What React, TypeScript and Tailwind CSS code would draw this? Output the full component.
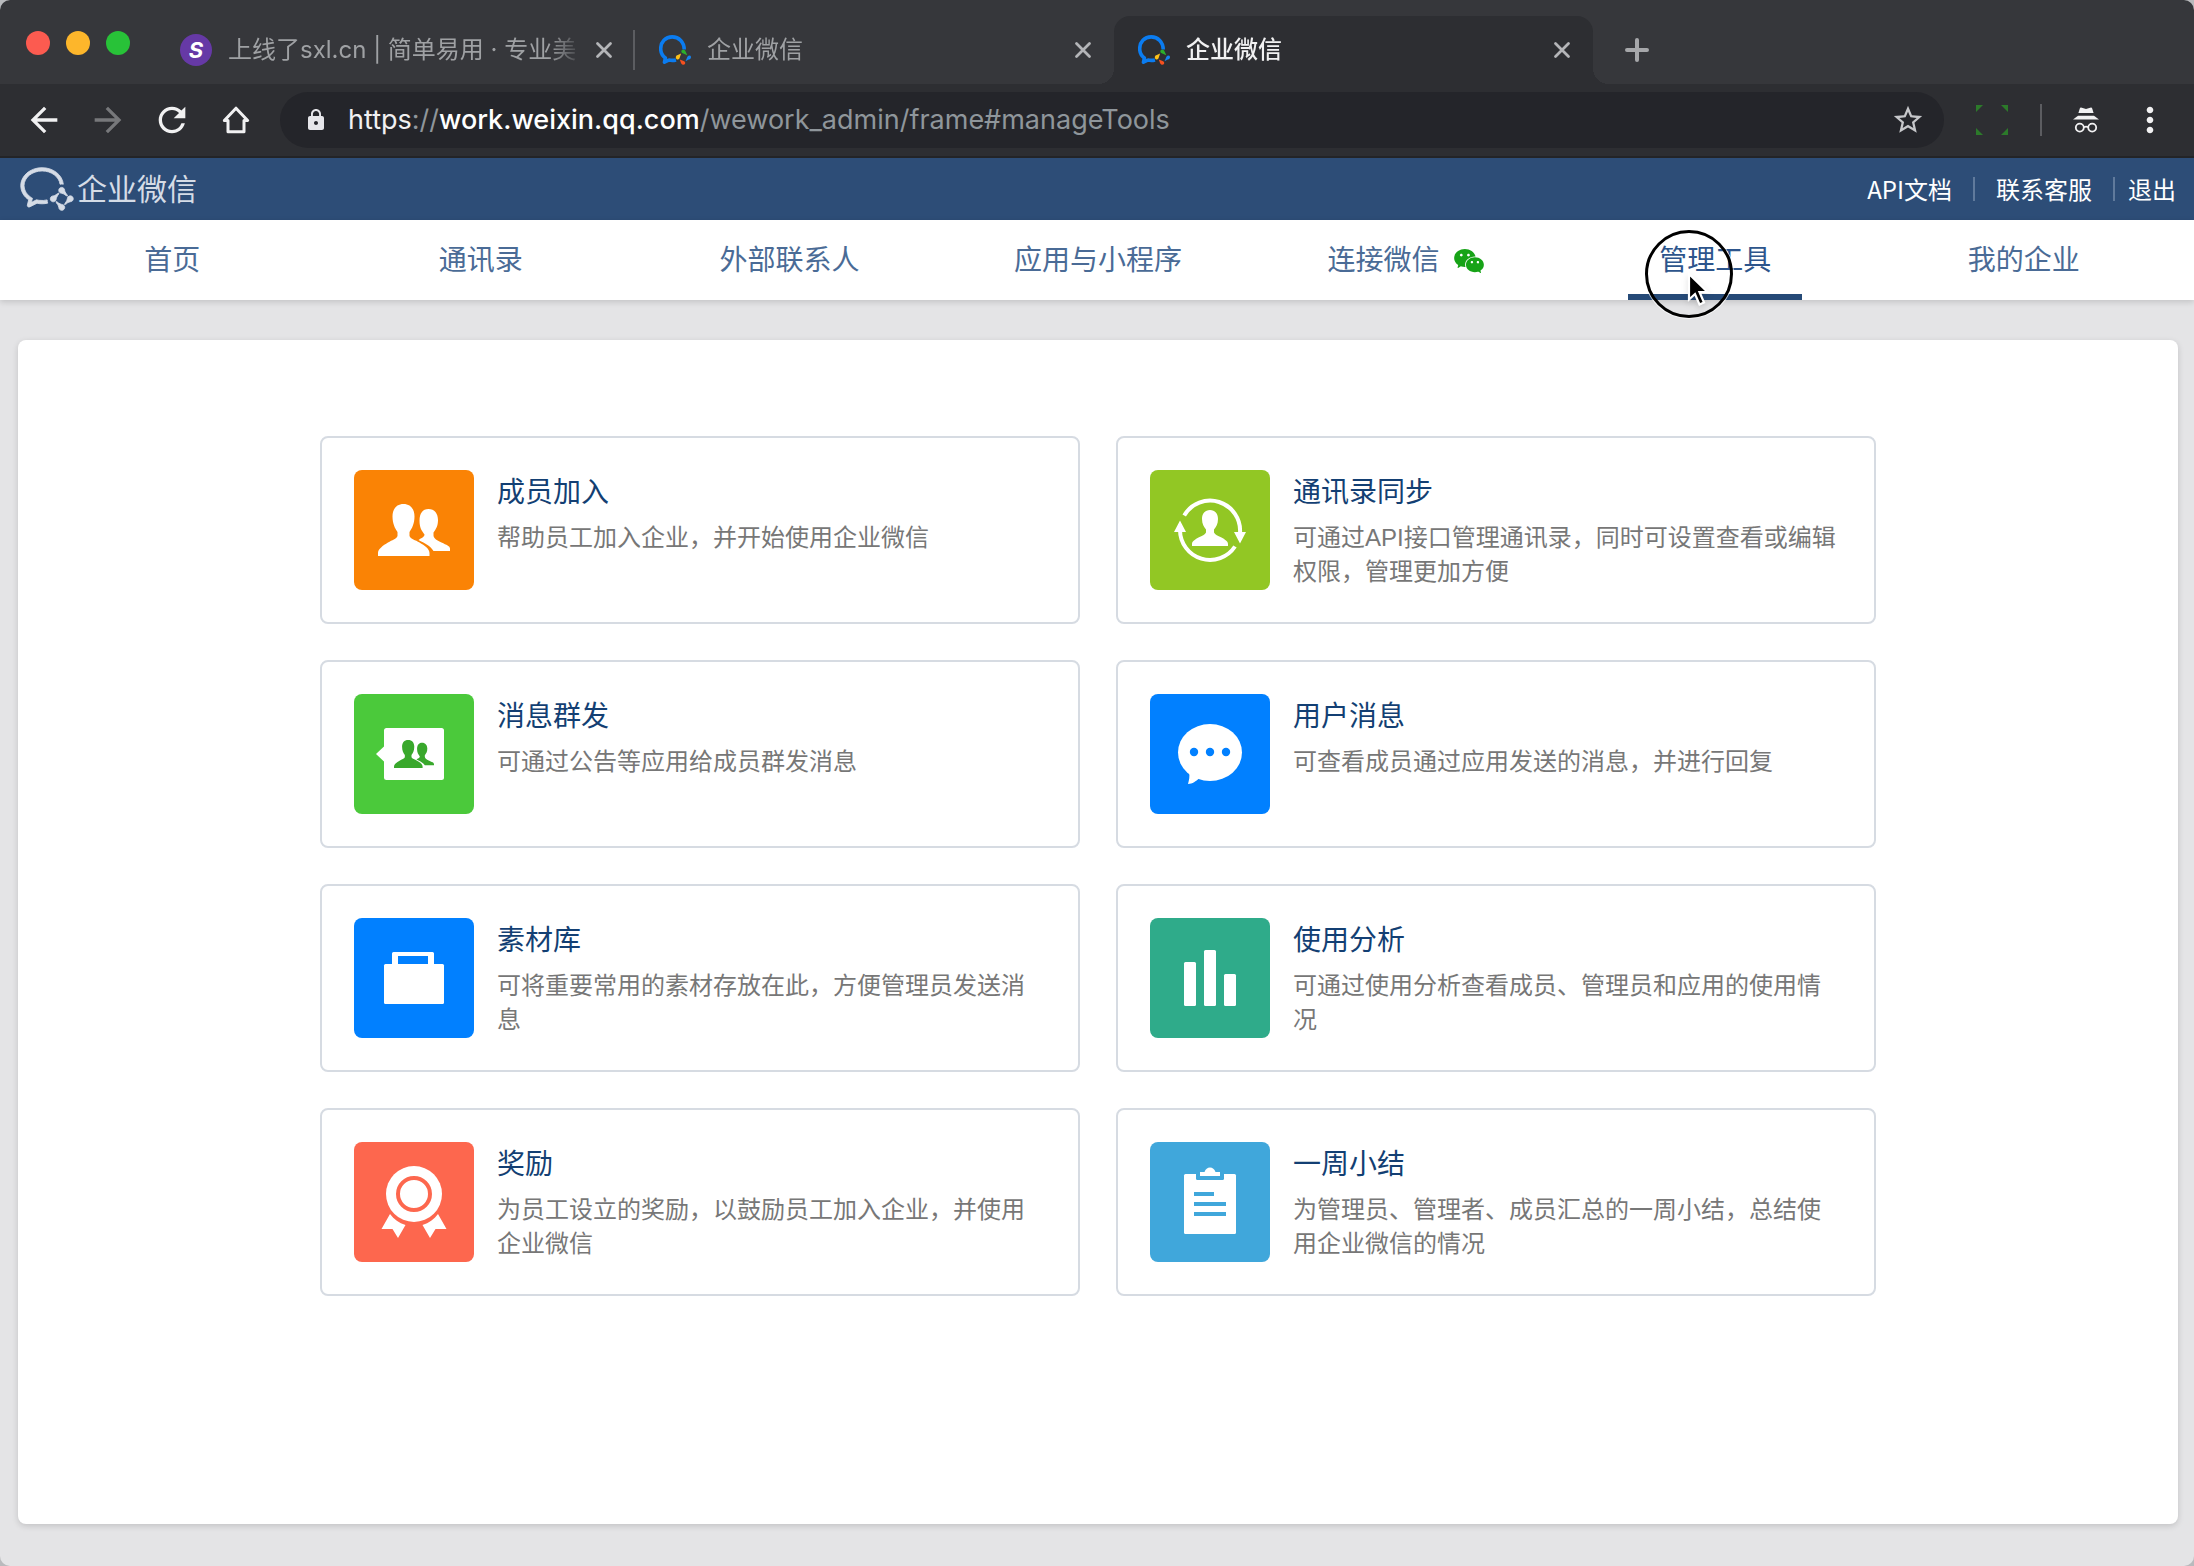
import React from 'react';
import { AiFillWechat, AiOutlineWechatWork } from 'react-icons/ai';
import {
  MdArrowBack,
  MdArrowForward,
  MdLock,
  MdMoreVert,
  MdRefresh,
  MdStarBorder,
} from 'react-icons/md';

const WorkFavicon = () => (
  <svg viewBox="0 0 32 30" className="h-[30px] w-8 shrink-0" fill="none">
    <path
      d="M25.200 14.500C25.200 7 20 1.900 13.200 1.900S1.700 7 1.700 13.800c0 4 1.800 7.200 4.700 9.200l-.9 4.200 4.600-2.200c1.500.4 4.300.6 6.900-.1"
      stroke="#0b7cf0"
      strokeWidth="3.600"
      strokeLinejoin="round"
    />
    <path d="M22.500 15.500a2.400 2.400 0 0 1 4.200 1.200l1.600 3.600-4-1.800a2.400 2.400 0 0 1-1.800-3z" fill="#2bb02b" />
    <path d="M31.500 20.800a2.400 2.400 0 0 1-1.800 3.800l-3.200 1.700 1.700-4a2.400 2.400 0 0 1 3.300-1.500z" fill="#1583ef" />
    <path d="M26 29a2.400 2.400 0 0 1-4-1l-1.200-3.400 3.800 1.300A2.400 2.400 0 0 1 26 29z" fill="#f5501f" />
    <path d="M17.600 24.300a2.400 2.400 0 0 1 1.200-4.200l3.300-1.600-1.300 4a2.400 2.400 0 0 1-3.200 1.800z" fill="#fcc019" />
  </svg>
);

const CloseIcon = () => (
  <svg viewBox="0 0 24 24" className="h-6 w-6" stroke="currentColor" strokeWidth="2.800" strokeLinecap="round">
    <path d="M5.500 5.500l13 13M18.500 5.500l-13 13" />
  </svg>
);

const HomeIcon = () => (
  <svg viewBox="0 0 24 24" className="h-10 w-10" fill="none" stroke="currentColor" strokeWidth="1.800">
    <path d="M5 12.300L12 4.900l7 7.400h-2.200v6.800H7.200v-6.800z" strokeLinejoin="round" />
  </svg>
);

const IncognitoIcon = () => (
  <svg viewBox="0 0 40 40" className="h-10 w-10" fill="currentColor">
    <path d="M15 7.500l5 1.400 5-1.400c.7 0 1 .3 1.200.9l1.400 4.600H12.400l1.400-4.600c.2-.6.5-.9 1.200-.9z" />
    <path d="M12 15.800h16l5 3.700H7z" />
    <g fill="none" stroke="currentColor" strokeWidth="1.800">
      <circle cx="13.800" cy="27.600" r="4" />
      <circle cx="26.200" cy="27.600" r="4" />
      <path d="M17.800 27.200c1.500-.8 3-.8 4.400 0" />
    </g>
  </svg>
);

const CaptureIcon = () => (
  <svg viewBox="0 0 32 32" className="h-8 w-8" fill="#2c7a2a">
    <path d="M0 1h7l-2 2-3 3-2 2zM32 1h-7l2 2 3 3 2 2zM0 31h7l-2-2-3-3-2-2zM32 31h-7l2-2 3-3 2-2z" />
  </svg>
);

const Tab = ({ icon, title, active, divided }) => (
  <div
    className={`relative flex w-[479px] items-center pl-6 pr-[19px] ${
      active ? 'rounded-t-2xl bg-[#2d2e32] text-[#f1f1f2]' : 'text-[#9fa1a4]'
    }`}
  >
    {active && (
      <>
        <span className="absolute bottom-0 -left-4 h-4 w-4 bg-[radial-gradient(circle_at_0_0,transparent_16px,#2d2e32_16px)]" />
        <span className="absolute bottom-0 -right-4 h-4 w-4 bg-[radial-gradient(circle_at_100%_0,transparent_16px,#2d2e32_16px)]" />
      </>
    )}
    {icon}
    <span
      className={`ml-4 mr-2 min-w-0 flex-1 overflow-hidden whitespace-nowrap text-[24px] leading-8 [mask-image:linear-gradient(to_right,black_90%,transparent)] ${
        active ? 'font-medium' : ''
      }`}
    >
      {title}
    </span>
    <button type="button" aria-label="关闭" className="text-[#b4b5b8]">
      <CloseIcon />
    </button>
    {divided && <span className="absolute right-0 h-10 w-[2px] bg-[#5c5d61]" />}
  </div>
);

const Browser = () => (
  <div className="font-[Inter,'Noto_Sans_CJK_SC',sans-serif]">
    <div className="flex h-[84px] bg-[#36373b] pl-[26px] pt-4">
      <div className="mr-[26px] mt-[15px] flex gap-4">
        <span className="h-6 w-6 rounded-full bg-[#fc5b50]" />
        <span className="h-6 w-6 rounded-full bg-[#fdb62b]" />
        <span className="h-6 w-6 rounded-full bg-[#28c238]" />
      </div>
      <Tab
        divided
        icon={
          <span className="flex h-8 w-8 shrink-0 items-center justify-center rounded-full bg-[#6639a6] text-[22px] font-bold italic text-white">
            S
          </span>
        }
        title="上线了sxl.cn | 简单易用 · 专业美"
      />
      <Tab icon={<WorkFavicon />} title="企业微信" />
      <Tab icon={<WorkFavicon />} title="企业微信" active />
      <button type="button" aria-label="新标签页" className="ml-6 flex items-center text-[#a6a7aa]">
        <svg viewBox="0 0 40 40" className="h-10 w-10" stroke="currentColor" strokeWidth="4" strokeLinecap="round">
          <path d="M20 10v20M10 20h20" />
        </svg>
      </button>
    </div>
    <div className="flex h-[74px] items-center border-b-2 border-[#232427] bg-[#2d2e32] px-6 text-[#f1f1f2]">
      <div className="flex gap-6">
        <button type="button" aria-label="后退">
          <MdArrowBack className="h-10 w-10" />
        </button>
        <button type="button" aria-label="前进" className="text-[#77787b]">
          <MdArrowForward className="h-10 w-10" />
        </button>
        <button type="button" aria-label="重新加载">
          <MdRefresh className="h-10 w-10" />
        </button>
        <button type="button" aria-label="主页">
          <HomeIcon />
        </button>
      </div>
      <div className="ml-6 mr-8 flex h-14 flex-1 items-center rounded-full bg-[#24252a] pl-6 pr-[19px]">
        <MdLock className="h-6 w-6 text-[#e6e6ea]" />
        <div role="textbox" aria-label="地址" className="ml-5 flex-1 text-[27px] leading-9 text-[#8f969b]">
          <span className="text-[#f1f1f2]">https</span>://
          <span className="font-medium text-white">work.weixin.qq.com</span>
          /wework_admin/frame#manageTools
        </div>
        <button type="button" aria-label="收藏" className="text-[#c6c7ca]">
          <MdStarBorder className="h-[34px] w-[34px]" />
        </button>
      </div>
      <button type="button" aria-label="截图">
        <CaptureIcon />
      </button>
      <span className="ml-8 mr-6 h-8 w-[2px] bg-[#5c5d61]" />
      <IncognitoIcon />
      <button type="button" aria-label="更多" className="ml-6">
        <MdMoreVert className="h-10 w-10" />
      </button>
    </div>
  </div>
);

const Pointer = () => (
  <span className="pointer-events-none absolute left-1/2 top-[10px] z-10 -ml-[70px] h-[88px] w-[88px] rounded-full border-[3px] border-black shadow-[0_0_0_1px_rgba(255,255,255,0.7)]">
    <svg viewBox="-3 -3 24 38" className="absolute left-[38px] top-[38px] h-[38px] w-6 drop-shadow-md">
      <path
        d="M0 0v25.500l6-5.500 4.500 10.500 4.500-2-4.500-10.500h8z"
        fill="black"
        stroke="white"
        strokeWidth="2.200"
      />
    </svg>
  </span>
);

const navItems = ['首页', '通讯录', '外部联系人', '应用与小程序', '连接微信', '管理工具', '我的企业'];

const Header = () => (
  <>
    <header className="flex h-[62px] items-center justify-between bg-[#2d4d77] pl-[17px] pr-[18px]">
      <a href="#home" className="flex items-center text-[30px] text-[#d5dce6]">
        <AiOutlineWechatWork className="h-[60px] w-[60px]" stroke="currentColor" strokeWidth="14" />
        企业微信
      </a>
      <div className="flex items-center font-['Noto_Sans_CJK_SC',sans-serif] text-[24px] leading-8 text-white">
        <a href="#api">API文档</a>
        <span className="mx-[21px] h-6 w-[2px] bg-[#607a9c]" />
        <a href="#service">联系客服</a>
        <span className="ml-[21px] mr-[13px] h-6 w-[2px] bg-[#607a9c]" />
        <a href="#logout">退出</a>
      </div>
    </header>
    <nav className="relative flex h-20 bg-white pl-[18px] pr-4 text-[28px] text-[#4a6b96] shadow-[0_2px_6px_rgba(0,0,0,0.15)]">
      {navItems.map((item) => {
        const active = item === '管理工具';
        return (
          <div key={item} className="relative flex flex-1 justify-center">
            <a
              href={`#${item}`}
              className={`flex items-center gap-3 border-b-[6px] px-[31px] pt-2 ${
                active ? 'border-[#264a77] text-[#2d558c]' : 'border-transparent'
              }`}
            >
              {item}
              {item === '连接微信' && <AiFillWechat className="h-[34px] w-[34px] text-[#17a317]" />}
            </a>
            {active && <Pointer />}
          </div>
        );
      })}
    </nav>
  </>
);

const People = () => (
  <>
    <path d="M49.500 34c7 0 11 5 11 12.500 0 7-2.500 12-5 15.500v4c1 3 6 4 10 6.500 5 3 10 6 10 10.500v3H24v-3c0-4 5-7.500 10-10.500 4-2.500 8.500-3.500 9.500-6.500v-4c-2.500-3.500-5-8.500-5-15.500 0-7.500 4-12.500 11-12.500z" />
    <path d="M74.500 39c6 0 9.500 4.500 9.500 11 0 6-2 9-4.500 12.500v3c0 3 4 5 8 7 5 2.500 8.500 3.500 8.500 6V81H79.500c-3-5-9-8-15-11 2-1.500 6-3 6-5.500-3-4-5-7-5-14 0-7 3-11.500 9-11.500z" />
  </>
);

const tools = [
  {
    title: '成员加入',
    text: '帮助员工加入企业，并开始使用企业微信',
    color: 'bg-[#fa8305] text-[#fa8305]',
    icon: <People />,
  },
  {
    title: '通讯录同步',
    text: '可通过API接口管理通讯录，同时可设置查看或编辑权限，管理更加方便',
    color: 'bg-[#92c724] text-[#92c724]',
    icon: (
      <>
        <path d="M60 40c5 0 8 3.500 8 9 0 5-2 8-4 10.500v3c1 2.500 4 3 7 4.800 4 2.200 7 4 7 6.700v2H42v-2c0-2.700 3-4.500 7-6.700 3-1.800 6-2.300 7-4.800v-3c-2-2.500-4-5.500-4-10.500 0-5.500 3-9 8-9z" />
        <g fill="none" stroke="white" strokeWidth="4">
          <path d="M34.200 45.500A30 30 0 0 1 90 63" />
          <path d="M30 60a30 30 0 0 0 55 16.500" />
        </g>
        <path d="M84 62h12l-6 11.500zM24 62h12l-6-11.500z" />
      </>
    ),
  },
  {
    title: '消息群发',
    text: '可通过公告等应用给成员群发消息',
    color: 'bg-[#4bc93b] text-[#39a82c]',
    icon: (
      <>
        <rect x="30" y="34" width="60" height="52" rx="2.500" />
        <path d="M30.500 52l-8.500 8 8.500 8z" />
        <g fill="currentColor" transform="translate(26.700 27.600) scale(.555 .54)">
          <People />
        </g>
      </>
    ),
  },
  {
    title: '用户消息',
    text: '可查看成员通过应用发送的消息，并进行回复',
    color: 'bg-[#0180ff] text-[#0180ff]',
    icon: (
      <>
        <ellipse cx="60" cy="58.500" rx="32" ry="28.500" />
        <path d="M39 78c1 4.500 0 8-1 12 4.500 0 8-3 11-5.500z" />
        <g fill="currentColor">
          <circle cx="44" cy="58" r="4.200" />
          <circle cx="60" cy="58" r="4.200" />
          <circle cx="76" cy="58" r="4.200" />
        </g>
      </>
    ),
  },
  {
    title: '素材库',
    text: '可将重要常用的素材存放在此，方便管理员发送消息',
    color: 'bg-[#0180ff] text-[#0180ff]',
    icon: (
      <>
        <rect x="30" y="46" width="60" height="40" rx="1.500" />
        <path d="M38 47V35.500a1.500 1.500 0 0 1 1.500-1.500h39a1.500 1.500 0 0 1 1.500 1.500V47h-6v-9H44v9z" />
      </>
    ),
  },
  {
    title: '使用分析',
    text: '可通过使用分析查看成员、管理员和应用的使用情况',
    color: 'bg-[#2fab8a] text-[#2fab8a]',
    icon: (
      <>
        <rect x="34" y="44" width="12" height="44" rx="1.500" />
        <rect x="54" y="32" width="12" height="56" rx="1.500" />
        <rect x="74" y="56" width="12" height="32" rx="1.500" />
      </>
    ),
  },
  {
    title: '奖励',
    text: '为员工设立的奖励，以鼓励员工加入企业，并使用企业微信',
    color: 'bg-[#fd674e] text-[#fd674e]',
    icon: (
      <>
        <circle cx="60" cy="52" r="28" />
        <circle cx="60" cy="52" r="16" fill="none" stroke="currentColor" strokeWidth="4" />
        <path d="M36 72c4 5.500 9 9 15.500 11L44 96l-5.500-9H27.500zM84 72c-4 5.500-9 9-15.500 11L76 96l5.500-9h11z" />
      </>
    ),
  },
  {
    title: '一周小结',
    text: '为管理员、管理者、成员汇总的一周小结，总结使用企业微信的情况',
    color: 'bg-[#40a7db] text-[#40a7db]',
    icon: (
      <>
        <rect x="34" y="32" width="52" height="60" rx="1.500" />
        <path d="M46 31h28v5.500a1.500 1.500 0 0 1-1.500 1.500h-25a1.500 1.500 0 0 1-1.500-1.500z" fill="currentColor" />
        <path d="M50 30h4.500c1-3 3-4.500 5.500-4.500s4.500 1.500 5.500 4.500H70v4H50z" />
        <path d="M44 50h20v4H44zM44 60h32v4H44zM44 70h32v4H44z" fill="currentColor" />
      </>
    ),
  },
];

const App = () => {
  return (
    <div className="bg-[#b9babd]">
      <div className="flex min-h-screen flex-col overflow-hidden rounded-[10px] bg-[#e4e4e6] font-['Liberation_Sans','Noto_Sans_CJK_SC',sans-serif]">
        <Browser />
        <Header />
        <main className="mb-[42px] ml-[18px] mr-4 mt-10 flex-1 rounded-lg bg-white px-10 py-24 shadow-[0_2px_6px_rgba(0,0,0,0.15)]">
          <div className="mx-auto grid max-w-[1556px] grid-cols-2 gap-9">
            {tools.map(({ title, text, color, icon }) => (
              <a
                key={title}
                href={`#${title}`}
                className="flex gap-[23px] rounded-lg border-2 border-[#d6dbe2] p-8"
              >
                <svg viewBox="0 0 120 120" className={`h-[120px] w-[120px] shrink-0 rounded-lg ${color}`} fill="white">
                  {icon}
                </svg>
                <div>
                  <h2 className="text-[28px] leading-[46px] text-[#133f73]">{title}</h2>
                  <p className="mt-[5px] text-[24px] leading-[34px] text-[#777777]">{text}</p>
                </div>
              </a>
            ))}
          </div>
        </main>
      </div>
    </div>
  );
};

export default App;
